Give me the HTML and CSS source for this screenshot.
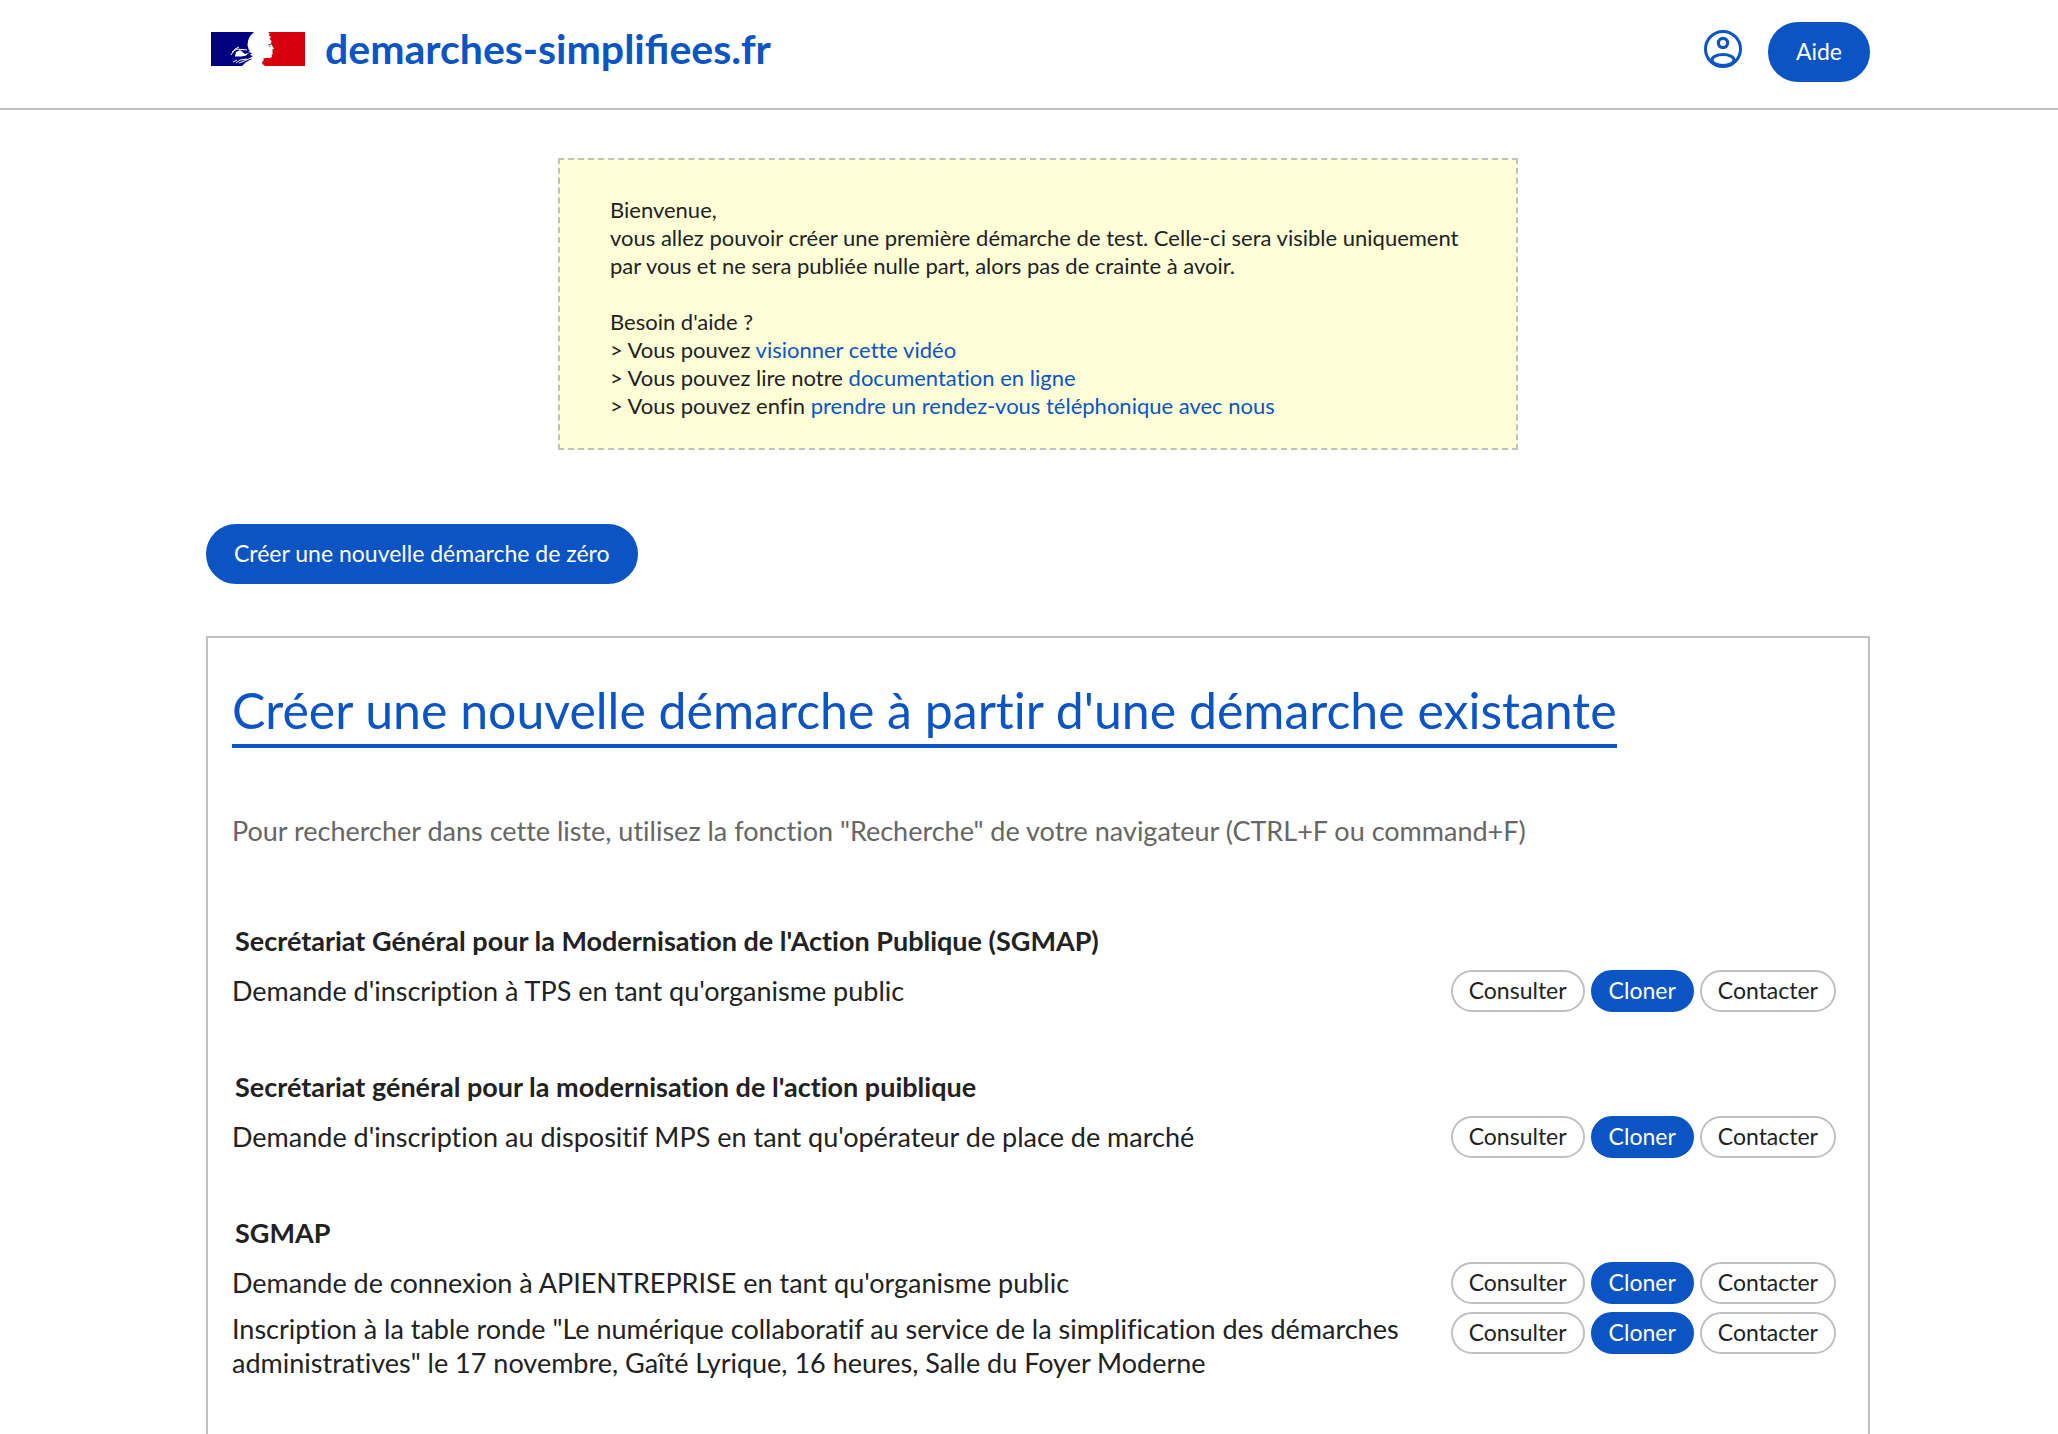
FILE: index.html
```html
<!DOCTYPE html>
<html lang="fr">
<head>
<meta charset="utf-8">
<meta name="viewport" content="width=device-width, initial-scale=1">
<title>demarches-simplifiees.fr</title>
<link rel="stylesheet" href="styles.css">
</head>
<body>
<header class="site-header">
  <a class="brand" href="#">
    <svg class="brand-flag" viewBox="0 0 94 34" aria-hidden="true">
      <path fill="#000080" d="M0 0H43L40 3L38 6L37 9L36.500 13L37.500 17L39 19L37 20L41 21L39 23L42 24L39 26L41 27L37 29L34 31L31 34H0Z"/>
      <path fill="#d5000f" d="M57 0H94V34H54L51.500 32L51 30L53 28L52 26.500L55 26L59 26L61 25L60.500 23L62 21.500L61 20L62 19L61 18L63 16.500L60 12L60.500 9L58.500 7L60 5L57.500 3L59 2Z"/>
      <path fill="none" stroke="#fff" stroke-width="1" d="M20 23L24 17L28 15M21 20L26 17L36 18M24 24L31 24L36 22M22 30L26 28M25 31L29 28L36 27M28 31L33 29L40 26"/>
      <path fill="#fff" d="M25 20L29 18L34 22L38 21L34 24L27 24L24 24Z"/>
      <path fill="none" stroke="#555" stroke-width="1" d="M57 13L60 12M58 14.500L59.500 14"/>
    </svg>
    <span class="brand-name">demarches-simplifiees.fr</span>
  </a>
  <nav class="header-actions">
    <button class="account" type="button" aria-label="Mon compte">
      <svg class="account-icon" viewBox="0 0 38 38" fill="none" stroke="#0b54c4" stroke-width="3" aria-hidden="true">
        <circle cx="19" cy="19" r="17.500"/>
        <circle cx="19" cy="13" r="4.600" stroke-width="3.200"/>
        <ellipse cx="19" cy="30" rx="11" ry="5.600"/>
      </svg>
    </button>
    <button class="button primary" type="button">Aide</button>
  </nav>
</header>
<main class="container">
  <section class="notice">
    <p>Bienvenue,<br>vous allez pouvoir créer une première démarche de test. Celle-ci sera visible uniquement par vous et ne sera publiée nulle part, alors pas de crainte à avoir.</p>
    <p>Besoin d'aide ?<br>
      &gt; Vous pouvez <a href="#">visionner cette vidéo</a><br>
      &gt; Vous pouvez lire notre <a href="#">documentation en ligne</a><br>
      &gt; Vous pouvez enfin <a href="#">prendre un rendez-vous téléphonique avec nous</a></p>
  </section>
  <button class="button primary" type="button">Créer une nouvelle démarche de zéro</button>
  <section class="panel">
    <h1 class="panel-title">Créer une nouvelle démarche à partir d'une démarche existante</h1>
    <p class="hint">Pour rechercher dans cette liste, utilisez la fonction "Recherche" de votre navigateur (CTRL+F ou command+F)</p>
    <section class="group">
      <h2 class="group-title">Secrétariat Général pour la Modernisation de l'Action Publique (SGMAP)</h2>
      <ul class="procedures">
        <li class="procedure">
          <span class="procedure-name">Demande d'inscription à TPS en tant qu'organisme public</span>
          <span class="procedure-actions"><button class="button small" type="button">Consulter</button><button class="button small primary" type="button">Cloner</button><button class="button small" type="button">Contacter</button></span>
        </li>
      </ul>
    </section>
    <section class="group">
      <h2 class="group-title">Secrétariat général pour la modernisation de l'action puiblique</h2>
      <ul class="procedures">
        <li class="procedure">
          <span class="procedure-name">Demande d'inscription au dispositif MPS en tant qu'opérateur de place de marché</span>
          <span class="procedure-actions"><button class="button small" type="button">Consulter</button><button class="button small primary" type="button">Cloner</button><button class="button small" type="button">Contacter</button></span>
        </li>
      </ul>
    </section>
    <section class="group">
      <h2 class="group-title">SGMAP</h2>
      <ul class="procedures">
        <li class="procedure">
          <span class="procedure-name">Demande de connexion à APIENTREPRISE en tant qu'organisme public</span>
          <span class="procedure-actions"><button class="button small" type="button">Consulter</button><button class="button small primary" type="button">Cloner</button><button class="button small" type="button">Contacter</button></span>
        </li>
        <li class="procedure">
          <span class="procedure-name">Inscription à la table ronde "Le numérique collaboratif au service de la simplification des démarches administratives" le 17 novembre, Gaîté Lyrique, 16 heures, Salle du Foyer Moderne</span>
          <span class="procedure-actions"><button class="button small" type="button">Consulter</button><button class="button small primary" type="button">Cloner</button><button class="button small" type="button">Contacter</button></span>
        </li>
      </ul>
    </section>
  </section>
</main>
</body>
</html>
```
FILE: styles.css
```css
* { box-sizing: border-box; }

body {
  margin: 0;
  background: #fff;
  color: #222;
  font-family: Lato, "Open Sans", sans-serif;
  font-size: 27px;
  font-variant-ligatures: none;
  line-height: 34px;
}

h1, h2, p, ul { margin: 0; padding: 0; }

a { color: #0b54c4; text-decoration: none; }

.site-header {
  display: flex;
  justify-content: space-between;
  align-items: flex-start;
  padding: 22px 188px 26px 206px;
  border-bottom: 2px solid #c0c0c0;
}

.brand {
  display: flex;
  align-items: center;
  gap: 20px;
  height: 54px;
  padding-left: 5px;
}

.brand-flag { width: 94px; height: 34px; }

.brand-name {
  font-size: 41px;
  font-weight: 700;
  font-variant-ligatures: normal;
}

.header-actions { display: flex; align-items: flex-start; gap: 26px; }

.account {
  display: flex;
  align-items: center;
  height: 54px;
  padding: 0;
  border: 0;
  background: none;
}

.account-icon { width: 38px; height: 38px; }

.button {
  height: 60px;
  padding: 0 26px 2px;
  border: 2px solid #c0c0c0;
  border-radius: 30px;
  background: #fff;
  color: #222;
  font: inherit;
  font-size: 23px;
  line-height: 28px;
}

.button.small {
  height: 42px;
  padding: 0 16px 2px;
  border-radius: 21px;
}

.button.primary {
  border-color: #0b54c4;
  background: #0b54c4;
  color: #fff;
}

.container { padding: 48px 188px 0 206px; }

.notice {
  display: grid;
  gap: 28px;
  max-width: 960px;
  margin: 0 auto 74px;
  padding: 36px 40px 28px 50px;
  border: 2px dashed #c0c0c0;
  background: #feffd6;
  font-size: 22px;
  line-height: 28px;
}

.panel {
  margin-top: 52px;
  padding: 44px 24px 80px;
  border: 2px solid #c0c0c0;
}

.panel-title {
  width: fit-content;
  margin-bottom: 66px;
  padding-bottom: 6px;
  border-bottom: 4px solid #0b54c4;
  color: #0b54c4;
  font-size: 50px;
  font-weight: 400;
  line-height: 56px;
}

.hint { margin-bottom: 76px; color: #666; }

.group { margin-bottom: 54px; }

.group-title {
  margin-bottom: 8px;
  padding-left: 3px;
  font-size: 27px;
  font-weight: 700;
}

.procedures { list-style: none; }

.procedure {
  display: flex;
  justify-content: space-between;
  align-items: flex-start;
  gap: 24px;
  padding: 4px 8px 4px 0;
}

.procedure-name {
  display: flex;
  align-items: center;
  min-height: 42px;
}

.procedure-actions { display: flex; flex-shrink: 0; gap: 6px; }
```
